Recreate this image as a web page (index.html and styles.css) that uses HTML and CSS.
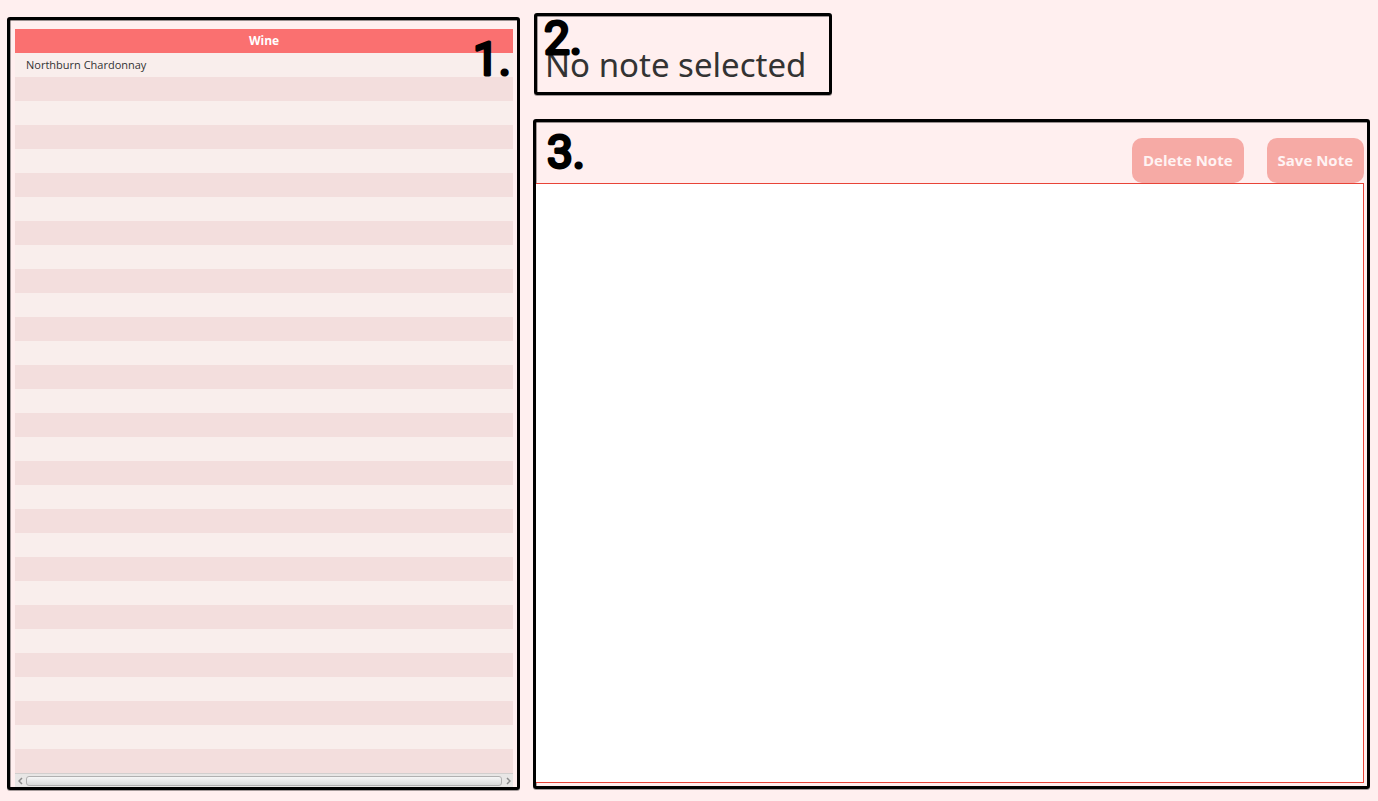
FILE: index.html
```
<!DOCTYPE html>
<html lang="en">
<head>
<meta charset="utf-8">
<title>Wine Notes</title>
<link rel="stylesheet" href="styles.css">
<script src="rows.js" defer></script>
</head>
<body>
<main class="page">
  <section class="frame wines">
    <svg class="marker marker-wines" width="44" height="44"><text x="2" y="38">1.</text></svg>
    <table class="wine-table">
      <thead><tr><th scope="col">Wine</th></tr></thead>
      <tbody id="wine-rows"><tr><td>Northburn Chardonnay</td></tr></tbody>
    </table>
    <div class="scrollbar">
      <button class="arrow" aria-label="Scroll left"><svg width="6" height="8" viewBox="0 0 6 8"><path d="M4 1 1 4 4 7"/></svg></button>
      <div class="thumb"></div>
      <button class="arrow" aria-label="Scroll right"><svg width="6" height="8" viewBox="0 0 6 8"><path d="M2 1 5 4 2 7"/></svg></button>
    </div>
  </section>
  <div class="detail">
    <header class="frame title-box">
      <svg class="marker marker-title" width="44" height="44"><text x="2" y="38">2.</text></svg>
      <h1 class="title">No note selected</h1>
    </header>
    <section class="frame editor">
      <svg class="marker marker-editor" width="44" height="44"><text x="2" y="38">3.</text></svg>
      <div class="actions">
        <button class="action">Delete Note</button>
        <button class="action">Save Note</button>
      </div>
      <textarea class="note" aria-label="Note"></textarea>
    </section>
  </div>
</main>
</body>
</html>
```
FILE: styles.css
```
* { box-sizing: border-box; }
body {
  margin: 0;
  background: #ffefef;
  color: #333;
  font-family: "Open Sans", "Noto Sans", sans-serif;
}
.page {
  display: grid;
  grid-template-columns: 38fr 62fr;
  gap: 13px;
  min-height: 100vh;
  padding: 13px 8px 11px 7px;
}
.frame {
  position: relative;
  border: 3px solid #000;
  border-radius: 3px;
  box-shadow: 0 1px 0 rgba(0, 0, 0, .35), inset 0 1px 0 rgba(0, 0, 0, .4), inset 1px 0 0 rgba(0, 0, 0, .35);
}
.wines {
  display: flex;
  flex-direction: column;
  margin-top: 4px;
  padding: 9px 4px 0 5px;
}
.wine-table {
  width: 100%;
  border-collapse: collapse;
  font-size: 11px;
  line-height: 24px;
}
.wine-table th {
  height: 24px;
  padding: 0;
  background: #fa7070;
  color: #fff;
  font-size: 12px;
  font-weight: 700;
}
.wine-table td {
  height: 24px;
  padding: 0 11px;
  background: #f9eeec;
}
.wine-table tbody tr:nth-child(even) td { background: #f3dedd; }
.scrollbar {
  display: flex;
  flex: 1;
  align-items: center;
  min-height: 14px;
  border-top: 1px solid #d2cfce;
  background: #e8e6e5;
}
.arrow {
  display: flex;
  justify-content: center;
  align-items: center;
  width: 11px;
  height: 12px;
  padding: 0;
  border: 0;
  background: none;
}
.arrow path { fill: none; stroke: #8b8b8b; stroke-width: 1.5; }
.thumb {
  flex: 1;
  height: 10px;
  border: 1px solid #b1b0b0;
  border-radius: 3px;
  background: linear-gradient(#f6f6f6, #d9d9d9);
}
.detail {
  display: flex;
  flex-direction: column;
  gap: 24px;
  padding-bottom: 1px;
}
.title-box {
  align-self: flex-start;
  margin-left: 1px;
  padding: 26px 23px 5px 8px;
}
.title {
  margin: 0;
  font-family: "Noto Sans", "Open Sans", sans-serif;
  font-size: 33px;
  font-weight: 400;
  line-height: 45px;
}
.editor {
  display: flex;
  flex: 1;
  flex-direction: column;
  padding: 16px 3px 3px 0;
}
.actions {
  display: flex;
  justify-content: flex-end;
  gap: 23px;
}
.action {
  height: 45px;
  padding: 0 11px 2px;
  border: 0;
  border-radius: 10px;
  background: #f6aaa5;
  color: #fff3f3;
  font: 700 15px/20px "Open Sans", "Noto Sans", sans-serif;
}
.note {
  flex: 1;
  width: 100%;
  padding: 8px;
  border: 1px solid #e84438;
  border-left: 0;
  background: #fff;
  font: 16px/22px "Open Sans", sans-serif;
  resize: none;
}
.marker { position: absolute; z-index: 1; overflow: visible; }
.marker text {
  fill: #000;
  stroke: #000;
  stroke-width: 3px;
  stroke-linejoin: round;
  font: 400 46px Roboto, sans-serif;
}
.marker-wines { top: 17px; right: 2px; }
.marker-title { top: 0; left: 5px; }
.marker-editor { top: 8px; left: 9px; }
```
FILE: rows.js
```
const body = document.getElementById("wine-rows");
for (let i = 1; i < 30; i++) {
  body.insertRow().insertCell();
}
```
